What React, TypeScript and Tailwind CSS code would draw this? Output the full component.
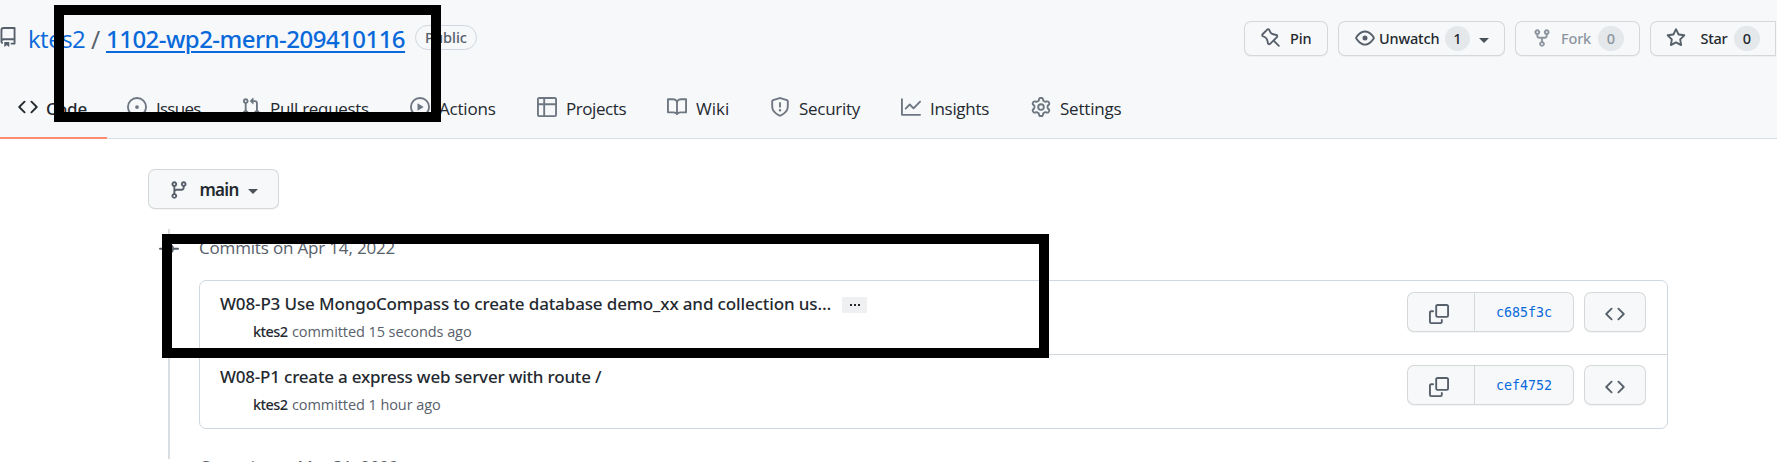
import type { ReactNode } from "react";
import { clsx } from "clsx";

const paths = {
  repo: "M2 2.5A2.5 2.5 0 014.5 0h8.75a.75.75 0 01.75.75v12.5a.75.75 0 01-.75.75h-2.5a.75.75 0 110-1.5h1.75v-2h-8a1 1 0 00-.714 1.7.75.75 0 01-1.072 1.05A2.495 2.495 0 012 11.5v-9zm10.5-1V9h-8c-.356 0-.694.074-1 .208V2.5a1 1 0 011-1h8zM5 12.25v3.25a.25.25 0 00.4.2l1.45-1.087a.25.25 0 01.3 0L8.6 15.7a.25.25 0 00.4-.2v-3.25a.25.25 0 00-.25-.25h-3.5a.25.25 0 00-.25.25z",
  code: "M4.72 3.22a.75.75 0 011.06 1.06L2.06 8l3.72 3.72a.75.75 0 11-1.06 1.06L.47 8.53a.75.75 0 010-1.06l4.25-4.25zm6.56 0a.75.75 0 10-1.06 1.06L13.94 8l-3.72 3.72a.75.75 0 101.06 1.06l4.25-4.25a.75.75 0 000-1.06l-4.25-4.25z",
  issue: "M8 9.5a1.5 1.5 0 100-3 1.5 1.5 0 000 3zM8 0a8 8 0 100 16A8 8 0 008 0zM1.5 8a6.5 6.5 0 1113 0 6.5 6.5 0 01-13 0z",
  pull: "M7.177 3.073L9.573.677A.25.25 0 0110 .854v4.792a.25.25 0 01-.427.177L7.177 3.427a.25.25 0 010-.354zM3.75 2.5a.75.75 0 100 1.5.75.75 0 000-1.5zm-2.25.75a2.25 2.25 0 113 2.122v5.256a2.251 2.251 0 11-1.5 0V5.372A2.25 2.25 0 011.5 3.25zM11 2.5h-1V4h1a1 1 0 011 1v5.628a2.251 2.251 0 101.5 0V5A2.5 2.5 0 0011 2.5zm1 10.25a.75.75 0 111.5 0 .75.75 0 01-1.5 0zM3.75 12a.75.75 0 100 1.5.75.75 0 000-1.5z",
  play: "M1.5 8a6.5 6.5 0 1113 0 6.5 6.5 0 01-13 0zM8 0a8 8 0 100 16A8 8 0 008 0zM6.379 5.227A.25.25 0 006 5.442v5.117a.25.25 0 00.379.214l4.264-2.559a.25.25 0 000-.428L6.379 5.227z",
  table: "M0 1.75C0 .784.784 0 1.75 0h12.5C15.216 0 16 .784 16 1.75v12.5A1.75 1.75 0 0114.25 16H1.75A1.75 1.75 0 010 14.25V1.75zM1.5 6.5v7.75c0 .138.112.25.25.25H5v-8H1.5zM5 5H1.5V1.75a.25.25 0 01.25-.25H5V5zm1.5 1.5v8h7.75a.25.25 0 00.25-.25V6.5h-8zm8-1.5h-8V1.5h7.75a.25.25 0 01.25.25V5z",
  book: "M0 1.75A.75.75 0 01.75 1h4.253c1.227 0 2.317.59 3 1.501A3.744 3.744 0 0111.006 1h4.245a.75.75 0 01.75.75v10.5a.75.75 0 01-.75.75h-4.507a2.25 2.25 0 00-1.591.659l-.622.621a.75.75 0 01-1.06 0l-.622-.621A2.25 2.25 0 005.258 13H.75a.75.75 0 01-.75-.75V1.75zm8.755 3a2.25 2.25 0 012.25-2.25H14.5v9h-3.757c-.71 0-1.4.201-1.992.572l.004-7.322zm-1.504 7.324l.004-5.073-.002-2.253A2.25 2.25 0 005.003 2.5H1.5v9h3.757a3.75 3.75 0 011.994.574z",
  shield: "M7.467.133a1.75 1.75 0 011.066 0l5.25 1.68A1.75 1.75 0 0115 3.48V7c0 1.566-.32 3.182-1.303 4.682-.983 1.498-2.585 2.813-5.032 3.855a1.7 1.7 0 01-1.33 0c-2.447-1.042-4.049-2.357-5.032-3.855C1.32 10.182 1 8.566 1 7V3.48a1.75 1.75 0 011.217-1.667l5.25-1.68zm.61 1.429a.25.25 0 00-.153 0l-5.25 1.68a.25.25 0 00-.174.238V7c0 1.358.275 2.666 1.057 3.86.784 1.194 2.121 2.34 4.366 3.297a.2.2 0 00.154 0c2.245-.956 3.582-2.104 4.366-3.298C13.225 9.666 13.5 8.36 13.5 7V3.48a.25.25 0 00-.174-.237l-5.25-1.68zM9 10.5a1 1 0 11-2 0 1 1 0 012 0zm-.25-5.75a.75.75 0 10-1.5 0v3a.75.75 0 001.5 0v-3z",
  graph: "M1.5 1.75a.75.75 0 00-1.5 0v12.5c0 .414.336.75.75.75h14.5a.75.75 0 000-1.5H1.5V1.75zm14.28 2.53a.75.75 0 00-1.06-1.06L10 7.94 7.53 5.47a.75.75 0 00-1.06 0L3.22 8.72a.75.75 0 001.06 1.06L7 7.06l2.47 2.47a.75.75 0 001.06 0l5.25-5.25z",
  gear: "M7.429 1.525a6.593 6.593 0 011.142 0c.036.003.108.036.137.146l.289 1.105c.147.56.55.967.997 1.189.174.086.341.183.501.29.417.278.97.423 1.53.27l1.102-.303c.11-.03.175.016.195.046.219.31.41.641.573.989.014.031.022.11-.059.19l-.815.806c-.411.406-.562.957-.53 1.456a4.588 4.588 0 010 .582c-.032.499.119 1.05.53 1.456l.815.806c.08.08.073.159.059.19a6.494 6.494 0 01-.573.99c-.02.029-.086.074-.195.045l-1.103-.303c-.559-.153-1.112-.008-1.529.27-.16.107-.327.204-.5.29-.449.222-.851.628-.998 1.189l-.289 1.105c-.029.11-.101.143-.137.146a6.613 6.613 0 01-1.142 0c-.036-.003-.108-.037-.137-.146l-.289-1.105c-.147-.56-.55-.967-.997-1.189a4.502 4.502 0 01-.501-.29c-.417-.278-.97-.423-1.53-.27l-1.102.303c-.11.03-.175-.016-.195-.046a6.492 6.492 0 01-.573-.989c-.014-.031-.022-.11.059-.19l.815-.806c.411-.406.562-.957.53-1.456a4.587 4.587 0 010-.582c.032-.499-.119-1.05-.53-1.456l-.815-.806c-.08-.08-.073-.159-.059-.19a6.44 6.44 0 01.573-.99c.02-.029.086-.075.195-.045l1.103.303c.559.153 1.112.008 1.529-.27.16-.107.327-.204.5-.29.449-.222.851-.628.998-1.189l.289-1.105c.029-.11.101-.143.137-.146zM8 0c-.236 0-.47.01-.701.03-.743.065-1.29.615-1.458 1.261l-.29 1.106c-.017.066-.078.158-.211.224a5.994 5.994 0 00-.668.386c-.123.082-.233.09-.3.071L3.27 2.776c-.644-.177-1.392.02-1.82.63a7.977 7.977 0 00-.704 1.217c-.315.675-.111 1.422.363 1.891l.815.806c.05.048.098.147.088.294a6.084 6.084 0 000 .772c.01.147-.038.246-.088.294l-.815.806c-.474.469-.678 1.216-.363 1.891.2.428.436.835.704 1.218.428.609 1.176.806 1.82.63l1.103-.303c.066-.019.176-.011.299.071.213.143.436.272.668.386.133.066.194.158.212.224l.289 1.106c.169.646.715 1.196 1.458 1.26a8.094 8.094 0 001.402 0c.743-.064 1.29-.614 1.458-1.26l.29-1.106c.017-.066.078-.158.211-.224a5.98 5.98 0 00.668-.386c.123-.082.233-.09.3-.071l1.102.302c.644.177 1.392-.02 1.82-.63.268-.382.505-.789.704-1.217.315-.675.111-1.422-.364-1.891l-.814-.806c-.05-.048-.098-.147-.088-.294a6.1 6.1 0 000-.772c-.01-.147.039-.246.088-.294l.814-.806c.475-.469.679-1.216.364-1.891a7.992 7.992 0 00-.704-1.218c-.428-.609-1.176-.806-1.82-.63l-1.103.303c-.066.019-.176.011-.299-.071a5.991 5.991 0 00-.668-.386c-.133-.066-.194-.158-.212-.224L10.16 1.29C9.99.645 9.444.095 8.701.031A8.094 8.094 0 008 0zm1.5 8a1.5 1.5 0 11-3 0 1.5 1.5 0 013 0zM11 8a3 3 0 11-6 0 3 3 0 016 0z",
  pin: "M4.456.734a1.75 1.75 0 012.826.504l.613 1.327a3.081 3.081 0 002.084 1.707l2.454.584c1.332.317 1.8 1.972.832 2.94L11.06 10l3.72 3.72a.75.75 0 11-1.061 1.06L10 11.06l-2.204 2.205c-.968.968-2.623.5-2.94-.832l-.584-2.454a3.081 3.081 0 00-1.707-2.084l-1.327-.613a1.75 1.75 0 01-.504-2.826L4.456.734zM5.92 1.866a.25.25 0 00-.404-.072L1.794 5.516a.25.25 0 00.072.404l1.328.613A4.582 4.582 0 015.73 9.63l.584 2.454a.25.25 0 00.42.12l5.47-5.47a.25.25 0 00-.12-.42L9.63 5.73a4.581 4.581 0 01-3.098-2.537L5.92 1.866z",
  eye: "M1.679 7.932c.412-.621 1.242-1.75 2.366-2.717C5.175 4.242 6.527 3.5 8 3.5c1.473 0 2.824.742 3.955 1.715 1.124.967 1.954 2.096 2.366 2.717a.119.119 0 010 .136c-.412.621-1.242 1.75-2.366 2.717C10.825 11.758 9.473 12.5 8 12.5c-1.473 0-2.824-.742-3.955-1.715C2.92 9.818 2.09 8.69 1.679 8.068a.119.119 0 010-.136zM8 2c-1.981 0-3.67.992-4.933 2.078C1.797 5.169.88 6.423.43 7.1a1.619 1.619 0 000 1.798c.45.678 1.367 1.932 2.637 3.024C4.329 13.008 6.019 14 8 14c1.981 0 3.67-.992 4.933-2.078 1.27-1.091 2.187-2.345 2.637-3.023a1.619 1.619 0 000-1.798c-.45-.678-1.367-1.932-2.637-3.023C11.671 2.992 9.981 2 8 2zm0 8a2 2 0 100-4 2 2 0 000 4z",
  fork: "M5 3.25a.75.75 0 11-1.5 0 .75.75 0 011.5 0zm0 2.122a2.25 2.25 0 10-1.5 0v.878A2.25 2.25 0 005.75 8.5h1.5v2.128a2.251 2.251 0 101.5 0V8.5h1.5a2.25 2.25 0 002.25-2.25v-.878a2.25 2.25 0 10-1.5 0v.878a.75.75 0 01-.75.75h-4.5A.75.75 0 015 6.25v-.878zm3.75 7.378a.75.75 0 11-1.5 0 .75.75 0 011.5 0zm3-8.75a.75.75 0 100-1.5.75.75 0 000 1.5z",
  star: "M8 .25a.75.75 0 01.673.418l1.882 3.815 4.21.612a.75.75 0 01.416 1.279l-3.046 2.97.719 4.192a.75.75 0 01-1.088.791L8 12.347l-3.766 1.98a.75.75 0 01-1.088-.79l.72-4.194L.818 6.374a.75.75 0 01.416-1.28l4.21-.611L7.327.668A.75.75 0 018 .25zm0 2.445L6.615 5.5a.75.75 0 01-.564.41l-3.097.45 2.24 2.184a.75.75 0 01.216.664l-.528 3.084 2.769-1.456a.75.75 0 01.698 0l2.77 1.456-.53-3.084a.75.75 0 01.216-.664l2.24-2.183-3.096-.45a.75.75 0 01-.564-.41L8 2.694v.001z",
  branch: "M11.75 2.5a.75.75 0 100 1.5.75.75 0 000-1.5zm-2.25.75a2.25 2.25 0 113 2.122V6A2.5 2.5 0 0110 8.5H6a1 1 0 00-1 1v1.128a2.251 2.251 0 11-1.5 0V5.372a2.25 2.25 0 111.5 0v1.836A2.492 2.492 0 016 7h4a1 1 0 001-1v-.628A2.25 2.25 0 019.5 3.25zM4.25 12a.75.75 0 100 1.5.75.75 0 000-1.5zM3.5 3.25a.75.75 0 111.5 0 .75.75 0 01-1.5 0z",
  commit: "M10.5 7.75a2.5 2.5 0 11-5 0 2.5 2.5 0 015 0zm1.43.75a4.002 4.002 0 01-7.86 0H.75a.75.75 0 110-1.5h3.32a4.001 4.001 0 017.86 0h3.32a.75.75 0 110 1.5h-3.32z",
  copy: "M0 6.75C0 5.784.784 5 1.75 5h1.5a.75.75 0 010 1.5h-1.5a.25.25 0 00-.25.25v7.5c0 .138.112.25.25.25h7.5a.25.25 0 00.25-.25v-1.5a.75.75 0 011.5 0v1.5A1.75 1.75 0 019.25 16h-7.5A1.75 1.75 0 010 14.25v-7.5zM5 1.75C5 .784 5.784 0 6.75 0h7.5C15.216 0 16 .784 16 1.75v7.5A1.75 1.75 0 0114.25 11h-7.5A1.75 1.75 0 015 9.25v-7.5zm1.75-.25a.25.25 0 00-.25.25v7.5c0 .138.112.25.25.25h7.5a.25.25 0 00.25-.25v-7.5a.25.25 0 00-.25-.25h-7.5z",
};

function Icon({ name, className }: { name: keyof typeof paths; className?: string }) {
  return (
    <svg viewBox="0 0 16 16" className={clsx("size-5 shrink-0 fill-current", className)}>
      <path fillRule="evenodd" d={paths[name]} />
    </svg>
  );
}

function Caret({ className }: { className?: string }) {
  return (
    <svg viewBox="0 0 10 5" className={clsx("h-[5px] w-[10px] shrink-0 fill-[#4b5259]", className)}>
      <path d="M0 0h10L5 5z" />
    </svg>
  );
}

const tabs: { icon: keyof typeof paths; label: string; width: string; text: string }[] = [
  { icon: "issue", label: "Issues", width: "w-[114px]", text: "tracking-[-0.75px]" },
  { icon: "pull", label: "Pull requests", width: "w-[169px]", text: "tracking-[-0.3px]" },
  { icon: "play", label: "Actions", width: "w-[127px]", text: "tracking-[-0.2px]" },
  { icon: "table", label: "Projects", width: "w-[130px]", text: "tracking-[-0.43px]" },
  { icon: "book", label: "Wiki", width: "w-[103px]", text: "" },
  { icon: "shield", label: "Security", width: "w-[131px]", text: "tracking-[-0.27px]" },
  { icon: "graph", label: "Insights", width: "w-[130px]", text: "tracking-[-0.3px]" },
  { icon: "gear", label: "Settings", width: "w-[100px]", text: "tracking-[-0.2px]" },
];

const buttonBase = "flex shrink-0 rounded-[7px] border border-[#1b1f24]/15 bg-[#f6f8fa] shadow-[0_1px_0_rgba(27,31,36,0.04)]";

function ActionButton({ className, children }: { className: string; children: ReactNode }) {
  return (
    <button className={clsx(buttonBase, "h-[35px] items-center text-[14.5px] font-medium text-[#24292f]", className)}>
      {children}
    </button>
  );
}

function Counter({ children, className }: { children: ReactNode; className?: string }) {
  return (
    <span className={clsx("flex h-[25px] shrink-0 items-center justify-center rounded-full bg-[#afb8c1]/25", className)}>
      {children}
    </span>
  );
}

function Header() {
  return (
    <header className="h-[139px] border-b border-[#d8dee4] bg-[#f6f8fa]">
      <div className="flex h-[77px] items-center">
        <Icon name="repo" className="mb-[3px] -ml-[2px] text-[#57606a]" />
        <a className="ml-[10px] w-[60px] font-['Open_Sans',sans-serif] text-[24px] leading-8 tracking-[-0.5px] whitespace-nowrap text-[#0969da]">ktes2</a>
        <span className="w-[18px] pl-[3px] font-['Open_Sans',sans-serif] text-[25px] leading-8 text-[#57606a]">/</span>
        <a className="w-[299px] text-[24px] leading-8 font-medium tracking-[-0.53px] whitespace-nowrap text-[#0969da] underline decoration-2 underline-offset-[3px]">
          1102-wp2-mern-209410116
        </a>
        <span className="mb-[2px] ml-[10px] flex h-[25px] w-[62px] items-center justify-center rounded-full border border-[#d0d7de] text-[14.5px] font-medium text-[#57606a]">
          Public
        </span>
        <div className="ml-[767px] flex gap-[10px]">
          <ActionButton className="w-[84px] pl-4">
            <Icon name="pin" className="mb-[2px] text-[#57606a]" />
            <span className="ml-[9px] tracking-[-0.1px]">Pin</span>
          </ActionButton>
          <ActionButton className="w-[167px] pl-4">
            <Icon name="eye" className="mb-[1px] text-[#57606a]" />
            <span className="ml-[4px] w-[60px] tracking-[-0.17px]">Unwatch</span>
            <Counter className="ml-[6px] w-[25px]">1</Counter>
            <Caret className="mt-[4px] ml-[9px]" />
          </ActionButton>
          <ActionButton className="w-[125px] pl-4 !text-[#8c959f]">
            <Icon name="fork" className="mb-[1px]" />
            <span className="ml-[9px] w-[30px] tracking-[-0.2px]">Fork</span>
            <Counter className="ml-[7px] w-[26px]">0</Counter>
          </ActionButton>
          <ActionButton className="w-[126px] rounded-r-none pl-[15px]">
            <Icon name="star" className="mb-[1px] text-[#57606a]" />
            <span className="ml-[14px] w-[28px] tracking-[-0.3px]">Star</span>
            <Counter className="ml-[6px] w-[26px]">0</Counter>
          </ActionButton>
        </div>
      </div>
      <nav className="flex h-[62px] text-[17px] text-[#24292f]">
        <a className="flex h-full w-[107px] items-center border-b-2 border-[#fd8c73] pl-[18px] font-medium">
          <Icon name="code" className="mb-px" />
          <span className="ml-[8px] pt-[4px] tracking-[-0.1px]">Code</span>
        </a>
        <div className="ml-5 flex h-[60px] items-center">
          {tabs.map((tab) => (
            <a key={tab.label} className={clsx("flex shrink-0 items-center", tab.width)}>
              <Icon name={tab.icon} className="mb-px text-[#6e7781]" />
              <span className={clsx("ml-[9px] pt-[4px] font-['Open_Sans',sans-serif] whitespace-nowrap", tab.text)}>{tab.label}</span>
            </a>
          ))}
        </div>
      </nav>
    </header>
  );
}

function Commit({ title, age, sha, expandable, className, titleClass }: {
  title: string;
  age: string;
  sha: string;
  expandable?: boolean;
  className?: string;
  titleClass: string;
}) {
  return (
    <li className={clsx("flex justify-between pr-[21px] pl-5", className)}>
      <div className="pt-2">
        <div className="flex h-[27px] items-center text-[17px] font-medium text-[#24292f]">
          <span className={clsx("whitespace-nowrap", titleClass)}>{title}</span>
          {expandable && (
            <button className="mt-[3px] ml-[10px] flex h-4 w-[25px] items-center justify-center gap-[2px] rounded-[1px] bg-[#eef0f2]">
              <i className="size-[2px] bg-[#24292f]" />
              <i className="size-[2px] bg-[#24292f]" />
              <i className="size-[2px] bg-[#24292f]" />
            </button>
          )}
        </div>
        <div className="mt-[4px] flex h-[22px] items-center pl-[33px] text-[14.5px] whitespace-nowrap text-[#57606a]">
          <span className="w-[39px] font-medium tracking-[-0.6px] text-[#24292f]">ktes2</span>
          <span className="font-['Open_Sans',sans-serif] tracking-[-0.08px]">committed {age}</span>
        </div>
      </div>
      <div className="flex gap-[10px] pt-[10px]">
        <div className={clsx(buttonBase, "h-10 w-[167px]")}>
          <button className="flex w-[67px] items-center justify-center border-r border-[#1b1f24]/15 pt-[4px] pr-[4px] text-[#57606a]">
            <Icon name="copy" />
          </button>
          <button className="flex-1 pt-[2px] font-['DejaVu_Sans_Mono',monospace] text-[13.3px] text-[#0969da]">{sha}</button>
        </div>
        <button className={clsx(buttonBase, "h-10 w-[62px] items-center justify-center pt-[4px] text-[#57606a]")}>
          <Icon name="code" />
        </button>
      </div>
    </li>
  );
}

function DayHeading({ children }: { children: ReactNode }) {
  return (
    <h3 className="flex h-[38px] items-center font-['Open_Sans',sans-serif] text-[17px] tracking-[-0.17px] whitespace-nowrap text-[#57606a]">
      {children}
    </h3>
  );
}

export default function App() {
  return (
    <div className="relative h-[462px] overflow-hidden bg-white font-['Noto_Sans',sans-serif]">
      <Header />
      <main className="pt-[30px] pl-[148px]">
        <button className={clsx(buttonBase, "h-10 w-[131px] items-center pl-[20px]")}>
          <Icon name="branch" className="mt-px text-[#57606a]" />
          <span className="ml-[9px] w-[42px] pt-[2px] text-[17px] font-semibold tracking-[-0.7px] text-[#24292f]">main</span>
          <Caret className="mt-[5px] ml-[8px]" />
        </button>
        <div className="mt-5 flex">
          <div className="relative w-[51px] shrink-0">
            <div className="ml-5 h-[230px] w-[2px] bg-[#d8dee4]" />
            <Icon name="commit" className="absolute top-[10px] left-[11px] text-[#57606a]" />
          </div>
          <div>
            <DayHeading>Commits on Apr 14, 2022</DayHeading>
            <ul className="mt-[13px] w-[1469px] rounded-[7px] border border-[#d0d7de]">
              <Commit
                title="W08-P3 Use MongoCompass to create database demo_xx and collection us…"
                age="15 seconds ago"
                sha="c685f3c"
                expandable
                className="h-[74px] border-b border-[#d0d7de] pt-px"
                titleClass="w-[612px] tracking-[-0.13px]"
              />
              <Commit
                title="W08-P1 create a express web server with route /"
                age="1 hour ago"
                sha="cef4752"
                className="h-[73px]"
                titleClass="tracking-[-0.2px]"
              />
            </ul>
            <div className="mt-[19px]">
              <DayHeading>Commits on Mar 31, 2022</DayHeading>
            </div>
          </div>
        </div>
      </main>
      <div className="absolute top-[5px] left-[54px] h-[117px] w-[387px] border-[10px] border-black" />
      <div className="absolute top-[234px] left-[162px] h-[124px] w-[887px] border-[10px] border-black" />
    </div>
  );
}
